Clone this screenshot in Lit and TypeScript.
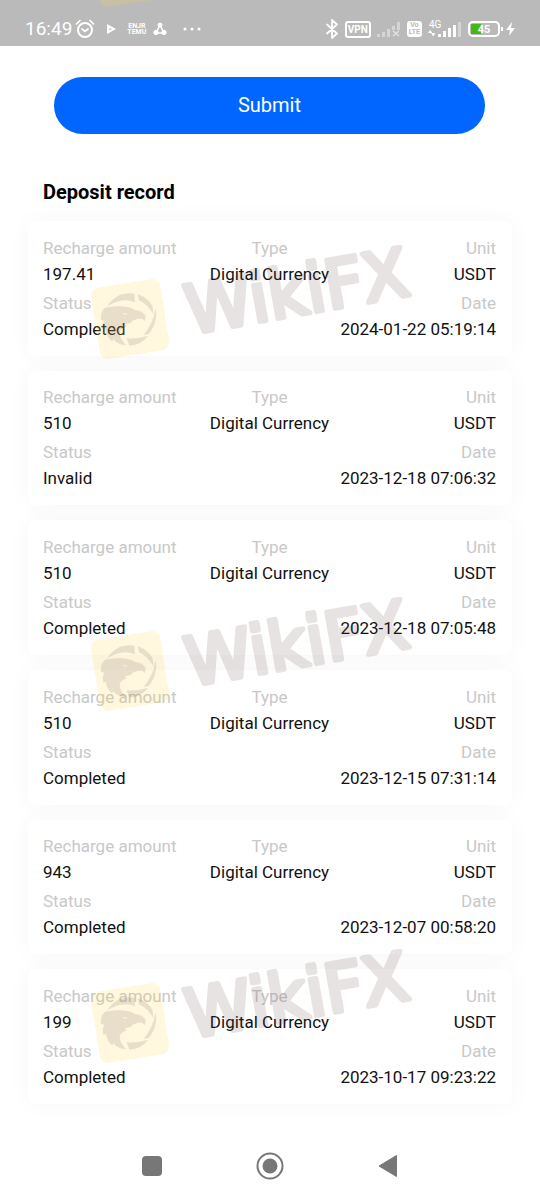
import { LitElement, html, css, svg, nothing } from "lit";
import { customElement } from "lit/decorators.js";

interface DepositRecord {
  amount: string;
  type: string;
  unit: string;
  status: string;
  date: string;
}

const RECORDS: DepositRecord[] = [
  { amount: "197.41", type: "Digital Currency", unit: "USDT", status: "Completed", date: "2024-01-22 05:19:14" },
  { amount: "510", type: "Digital Currency", unit: "USDT", status: "Invalid", date: "2023-12-18 07:06:32" },
  { amount: "510", type: "Digital Currency", unit: "USDT", status: "Completed", date: "2023-12-18 07:05:48" },
  { amount: "510", type: "Digital Currency", unit: "USDT", status: "Completed", date: "2023-12-15 07:31:14" },
  { amount: "943", type: "Digital Currency", unit: "USDT", status: "Completed", date: "2023-12-07 00:58:20" },
  { amount: "199", type: "Digital Currency", unit: "USDT", status: "Completed", date: "2023-10-17 09:23:22" },
];

@customElement("status-bar")
class StatusBar extends LitElement {
  static styles = css`
    :host {
      display: flex;
      align-items: center;
      justify-content: space-between;
      box-sizing: border-box;
      height: 46px;
      padding: 12px 24px 0 25px;
      background: #bababa;
      color: #fff;
    }
    .group {
      display: flex;
      align-items: center;
    }
    .left {
      gap: 7px;
    }
    .right {
      gap: 6px;
    }
    .clock {
      display: flex;
      align-items: center;
      gap: 3px;
      font-size: 19px;
      line-height: 24px;
    }
    .word {
      font-size: 7px;
      line-height: 6px;
      font-weight: 700;
      text-align: center;
    }
    .vpn {
      border: 2px solid #fff;
      border-radius: 3px;
      padding: 0 1px;
      font-size: 10px;
      line-height: 13px;
      font-weight: 700;
    }
    .lte {
      background: #fff;
      color: #bababa;
      border-radius: 3px;
      padding: 1px 2px;
      font-size: 7px;
      line-height: 7px;
      font-weight: 700;
      text-align: center;
    }
    svg {
      display: block;
    }
    text {
      font-family: Roboto, sans-serif;
      fill: #fff;
    }
  `;
  render() {
    return html`
      <div class="group left">
        <span class="clock"
          >16:49
          <svg width="20" height="20" viewBox="0 0 20 20" fill="none" stroke="#fff" stroke-width="2" stroke-linecap="round">
            <circle cx="10" cy="11" r="7" />
            <path d="M7 10l3 2.500 3-2.500M1.500 5l3.500-3.500M18.500 5L15 1.500" stroke-width="1.700" />
          </svg>
        </span>
        <svg width="18" height="12" viewBox="0 0 18 12"><path d="M5 1l9 5-9 5z" fill="#fff" /><path d="M7.500 5l2.500 1-2.500 1.500z" fill="#bababa" /></svg>
        <span class="word">ENJR<br />TEMU</span>
        <svg width="14" height="14" viewBox="0 0 14 14" fill="#fff" stroke="#fff">
          <path d="M7 3L3 11M7 3l4 8M3 11h8" stroke-width="1.500" />
          <circle cx="7" cy="3" r="2" /><circle cx="3" cy="10.500" r="2.200" /><circle cx="11" cy="10.500" r="2.200" />
        </svg>
        <svg width="34" height="8" viewBox="0 0 34 8" fill="#fff"><circle cx="11" cy="4" r="1.500" /><circle cx="18" cy="4" r="1.500" /><circle cx="25" cy="4" r="1.500" /></svg>
      </div>
      <div class="group right">
        <svg width="14" height="20" viewBox="0 0 14 20" fill="none" stroke="#fff" stroke-width="1.800" stroke-linejoin="round" stroke-linecap="round">
          <path d="M2 5.500l10 9L7 19V1l5 4.500-10 9" />
        </svg>
        <span class="vpn">VPN</span>
        <svg width="24" height="16" viewBox="0 0 24 16" fill="#fff">
          <g opacity=".4"><path d="M0 13h3v3H0zM5 11h3v5H5zM10 8h3v8h-3zM15 5h3v4h-3zM20 1h3v8h-3z" /></g>
          <path d="M16 10l6 5M22 10l-6 5" stroke="#fff" stroke-width="1.500" opacity=".6" />
        </svg>
        <span class="lte">Vo<br />LTE</span>
        <svg width="34" height="20" viewBox="0 0 34 20" fill="#fff">
          <text x="1" y="9" font-size="10">4G</text>
          <path d="M0 14l2.200-3 2.200 3zM3 14l2.200 3.500 2.200-3.500zM10 15h3v3h-3zM15 12h3v6h-3zM20 9h3v9h-3zM25 6h3v12h-3z" />
          <path d="M30 3h3v15h-3z" opacity=".4" />
        </svg>
        <svg width="48" height="18" viewBox="0 0 48 18">
          <path d="M3 4h10v10H3z" fill="#43b916" />
          <rect x="1" y="2" width="30" height="14" rx="4" fill="none" stroke="#fff" stroke-width="2" />
          <path d="M33 7h2v4h-2z" fill="#fff" />
          <text x="16" y="13" font-size="11" font-weight="700" text-anchor="middle">45</text>
          <path d="M44 2l-6 8h4l-1 6 6-8h-4z" fill="#fff" />
        </svg>
      </div>
    `;
  }
}

@customElement("deposit-card")
class DepositCard extends LitElement {
  static properties = { record: { attribute: false } };
  declare record: DepositRecord;
  static styles = css`
    :host {
      display: grid;
      align-content: center;
      gap: 3px;
      padding: 0 16px 0 15px;
      border-radius: 8px;
      background: #fff;
      box-shadow: 0 0 24px rgba(0, 0, 0, 0.035);
      font-size: 17px;
      line-height: 26px;
    }
    .row {
      display: grid;
      grid-auto-flow: column;
      grid-auto-columns: 1fr;
      margin: 0;
    }
    .cell {
      text-align: center;
      white-space: nowrap;
    }
    .cell:first-child {
      text-align: left;
    }
    .cell:last-child {
      text-align: right;
    }
    dt {
      color: #c8c8c8;
    }
    dd {
      margin: 0;
      color: #111;
    }
  `;
  private cell(label: string, value: string) {
    return html`<div class="cell"><dt>${label}</dt><dd>${value}</dd></div>`;
  }
  render() {
    const r = this.record;
    return html`
      <dl class="row">${this.cell("Recharge amount", r.amount)}${this.cell("Type", r.type)}${this.cell("Unit", r.unit)}</dl>
      <dl class="row">${this.cell("Status", r.status)}${this.cell("Date", r.date)}</dl>
    `;
  }
}

@customElement("water-mark")
class WaterMark extends LitElement {
  static properties = { named: { type: Boolean } };
  declare named: boolean;
  static styles = css`
    :host {
      display: block;
      height: 352px;
    }
    svg {
      display: block;
      margin: 0 auto;
    }
    text {
      font-family: "DejaVu Sans", sans-serif;
      font-size: 67px;
    }
  `;
  render() {
    return html`
      <svg width="420" height="352" viewBox="60 143 420 352" aria-hidden="true">
        <rect x="-35" y="-36" width="70" height="72" rx="8" fill="#ffd750" opacity=".19" transform="translate(130 319) rotate(-9)" />
        <g transform="translate(85 271) scale(.3333)" fill="#665058" opacity=".14">
          <path d="M66 106Q80 84 104 72Q126 64 148 68L150 94Q120 82 92 94Q76 100 66 106Z" />
          <path d="M158 70Q186 78 202 104L206 130Q186 98 162 88Z" />
          <path d="M212 112Q220 152 192 188L176 192Q198 164 206 138Z" />
          <path d="M124 202Q160 204 190 194Q170 220 134 224Z" />
          <path fill-rule="evenodd" d="M48 146Q46 122 60 110Q82 104 110 106Q136 108 152 118Q172 118 182 136L180 150Q170 140 158 144Q144 146 136 156L120 160L124 166Q104 174 104 190Q108 208 124 222Q98 222 84 204L82 212Q62 194 64 176L56 180Q50 164 58 150ZM112 126Q118 134 128 128Z" />
        </g>
        ${this.named
          ? svg`<text transform="translate(190 334) rotate(-10)" fill="#604040" stroke="#604040" stroke-width="5" stroke-linejoin="round" opacity=".14">WikiFX</text>`
          : nothing}
      </svg>
    `;
  }
}

@customElement("app-root")
class AppRoot extends LitElement {
  static styles = css`
    :host {
      display: flex;
      flex-direction: column;
      position: relative;
      min-height: 100vh;
      overflow: hidden;
      background: #fff;
      font-family: Roboto, sans-serif;
    }
    main {
      flex: 1;
      display: flex;
      flex-direction: column;
      padding: 31px 28px 28px;
    }
    .submit {
      height: 57px;
      margin: 0 27px 0 26px;
      padding: 0 0 2px;
      border: 0;
      border-radius: 29px;
      background: #0066ff;
      color: #fff;
      font: 400 20px/28px Roboto, sans-serif;
    }
    h1 {
      margin: 44px 15px 15px;
      font-size: 20px;
      line-height: 28px;
      font-weight: 700;
      color: #000;
    }
    .list {
      flex: 1;
      display: grid;
      grid-auto-rows: 1fr;
      gap: 15px;
    }
    nav {
      display: flex;
      justify-content: center;
      gap: 78px;
      height: 68px;
    }
    .key {
      display: grid;
      place-items: center;
      width: 40px;
      padding: 0;
      border: 0;
      background: none;
    }
    .marks {
      position: absolute;
      inset: -209px 0 0;
      overflow: hidden;
      pointer-events: none;
    }
  `;
  render() {
    return html`
      <status-bar></status-bar>
      <main>
        <button class="submit" type="button">Submit</button>
        <h1>Deposit record</h1>
        <div class="list">${RECORDS.map((r) => html`<deposit-card .record=${r}></deposit-card>`)}</div>
      </main>
      <nav>
        <button class="key" type="button" aria-label="Recent apps">
          <svg width="20" height="20"><rect width="20" height="20" rx="4" fill="#777" /></svg>
        </button>
        <button class="key" type="button" aria-label="Home">
          <svg width="28" height="28"><circle cx="14" cy="14" r="12.500" fill="none" stroke="#777" stroke-width="2" /><circle cx="14" cy="14" r="7.500" fill="#777" /></svg>
        </button>
        <button class="key" type="button" aria-label="Back">
          <svg width="20" height="24"><path d="M1 12L18.500 1.500v21z" fill="#777" stroke="#777" stroke-linejoin="round" /></svg>
        </button>
      </nav>
      <div class="marks">${[0, 1, 2, 3].map((i) => html`<water-mark .named=${i > 0}></water-mark>`)}</div>
    `;
  }
}
